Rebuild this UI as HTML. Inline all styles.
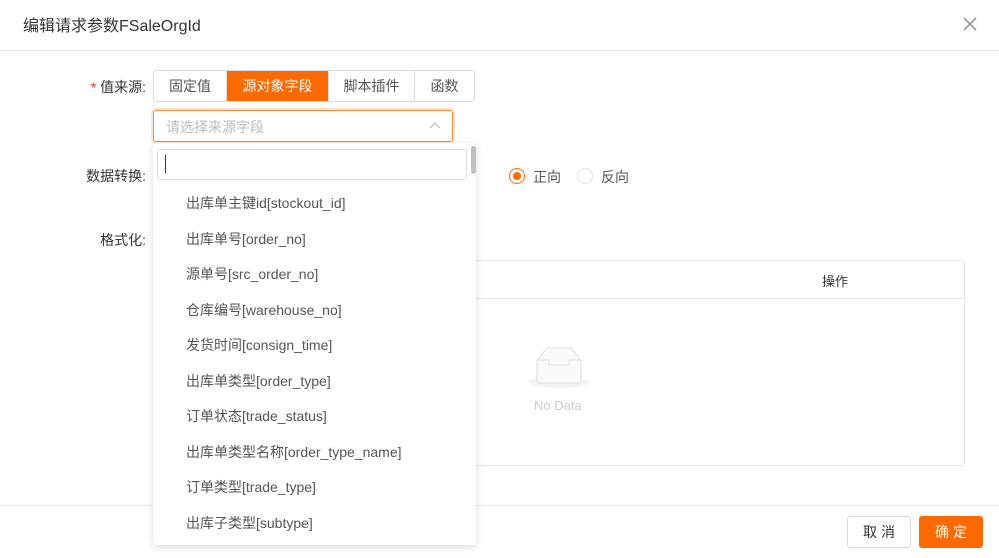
<!DOCTYPE html>
<html><head><meta charset="utf-8"><style>
*{box-sizing:border-box;margin:0;padding:0}
body{width:999px;height:558px;background:#fff;font-family:"Liberation Sans","Noto Sans CJK SC",sans-serif;position:relative;overflow:hidden;color:#333;font-size:14px}
.a{position:absolute}
.title{left:23px;top:12px;font-size:16px;color:#333}
.lbl{font-size:14px;color:#333;text-align:right;width:70px}
.seg{top:70px;height:32px;display:flex;left:153px;border:1px solid #dcdcdc;border-radius:3px;overflow:hidden}
.seg div{text-align:center;line-height:30px;font-size:14px;color:#555;border-right:1px solid #dcdcdc}
.seg div:last-child{border-right:none}
.seg .on{background:#ff6a00;color:#fff}
.item{left:186px;font-size:14px;color:#555}
</style></head><body>
<div class="a title">编辑请求参数FSaleOrgId</div>
<svg class="a" style="left:963px;top:17px" width="14" height="14"><path d="M1 1L13 13M13 1L1 13" stroke="#888" stroke-width="1.4"/></svg>
<div class="a" style="left:0;top:50px;width:999px;height:1px;background:#e8e8e8"></div>

<div class="a lbl" style="left:76px;top:77px"><span style="color:#f33">*</span> 值来源:</div>
<div class="a seg"><div style="width:73px">固定值</div><div class="on" style="width:102px">源对象字段</div><div style="width:86px">脚本插件</div><div style="width:59px">函数</div></div>
<div class="a" style="left:153px;top:110px;width:300px;height:32px;border:1px solid #ff8a3d;border-radius:3px;box-shadow:0 0 0 2px #ffe6d3"></div>
<div class="a" style="left:166px;top:117px;color:#bbb">请选择来源字段</div>
<svg class="a" style="left:429px;top:121px" width="12" height="8"><path d="M1 7L6 2L11 7" stroke="#bbb" fill="none" stroke-width="1.2"/></svg>

<div class="a lbl" style="left:76px;top:166px">数据转换:</div>
<div class="a" style="left:509px;top:168px;width:16px;height:16px;border:1px solid #ff6a00;border-radius:50%"></div>
<div class="a" style="left:513px;top:172px;width:8px;height:8px;background:#ff6a00;border-radius:50%"></div>
<div class="a" style="left:533px;top:167px;color:#555">正向</div>
<div class="a" style="left:577px;top:168px;width:16px;height:16px;border:1px solid #ddd;border-radius:50%"></div>
<div class="a" style="left:601px;top:167px;color:#555">反向</div>

<div class="a lbl" style="left:76px;top:230px">格式化:</div>
<div class="a" style="left:300px;top:260px;width:665px;height:206px;border:1px solid #e6e6e6;border-radius:3px"></div>
<div class="a" style="left:300px;top:298px;width:665px;height:1px;background:#e6e6e6"></div>
<div class="a" style="left:822px;top:271px;color:#333;font-size:13px">操作</div>
<svg class="a" style="left:527px;top:346px" width="64" height="44"><ellipse cx="32" cy="36" rx="31" ry="6" fill="#f3f3f3"/><path d="M10 14L20 2H44L54 14V34Q54 37 51 37H13Q10 37 10 34Z" fill="#fafafa" stroke="#ddd"/><path d="M10 14H21Q22 14 22 17V19H42V17Q42 14 43 14H54" fill="none" stroke="#ddd"/></svg>
<div class="a" style="left:534px;top:398px;color:#ccc;font-size:13px">No Data</div>

<div class="a" style="left:0;top:505px;width:999px;height:1px;background:#e8e8e8"></div>
<div class="a" style="left:847px;top:516px;width:64px;height:32px;border:1px solid #d9d9d9;border-radius:3px;text-align:center;line-height:30px;color:#333;letter-spacing:4px;padding-left:4px">取消</div>
<div class="a" style="left:919px;top:516px;width:64px;height:32px;background:#ff6a00;border-radius:3px;text-align:center;line-height:32px;color:#fff;letter-spacing:4px;padding-left:4px">确定</div>

<div class="a" style="left:153px;top:143px;width:323px;height:402px;background:#fff;border-radius:3px;box-shadow:0 2px 8px rgba(0,0,0,.15)"></div>
<div class="a" style="left:157px;top:149px;width:310px;height:31px;border:1px solid #dcdcdc;border-radius:3px"></div>
<div class="a" style="left:165px;top:155px;width:1px;height:18px;background:#333"></div>
<div class="a" style="left:471px;top:146px;width:5px;height:28px;background:#c1c1c1;border-radius:3px"></div>
<div class="a item" style="top:193px">出库单主键id[stockout_id]</div>
<div class="a item" style="top:229px">出库单号[order_no]</div>
<div class="a item" style="top:264px">源单号[src_order_no]</div>
<div class="a item" style="top:300px">仓库编号[warehouse_no]</div>
<div class="a item" style="top:335px">发货时间[consign_time]</div>
<div class="a item" style="top:371px">出库单类型[order_type]</div>
<div class="a item" style="top:406px">订单状态[trade_status]</div>
<div class="a item" style="top:442px">出库单类型名称[order_type_name]</div>
<div class="a item" style="top:477px">订单类型[trade_type]</div>
<div class="a item" style="top:513px">出库子类型[subtype]</div>
</body></html>
